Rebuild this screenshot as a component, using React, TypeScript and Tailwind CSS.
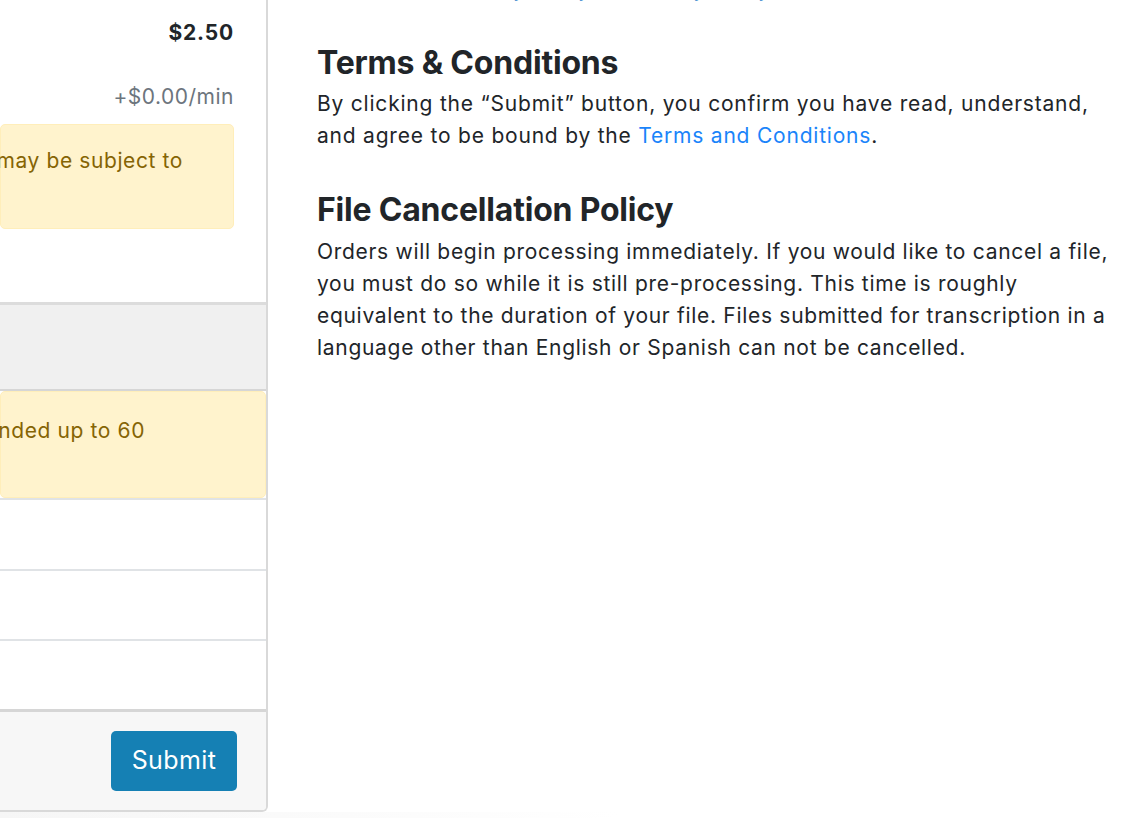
import React from "react";

export default function App() {
  const font = { fontFamily: "Inter, 'Noto Sans', sans-serif" };
  return (
    <div className="relative h-[818px] w-[1128px] overflow-hidden bg-white text-[#212529]" style={font}>
      <div className="flex">
        {/* Left panel (cropped) */}
        <div className="w-[268px] shrink-0 overflow-hidden">
          <div className="overflow-hidden rounded-br-[6px] border-r-2 border-b-2 border-[#d9d9d9]">
            <div className="h-[305px] border-b-[3px] border-[#dcdcdc] bg-white pr-[32px]">
              <div className="flex h-[65px] items-center justify-end text-[21px] font-bold tracking-[0.8px]">$2.50</div>
              <div className="flex h-[59px] items-center justify-end pt-[4px] text-[21px] tracking-[0.5px] text-[#6c757d]">+$0.00/min</div>
              <div className="flex h-[105px] items-start justify-end whitespace-nowrap rounded-[5px] border border-[#ffeeba] bg-[#fff3cd] pt-[20px] pr-[50px] text-[21px] leading-[32px] tracking-[0.6px] text-[#856404]">
                Audio in a foreign language may be subject to
              </div>
            </div>
            <div className="h-[86px] border-b-2 border-[#d6d6d6] bg-[#f0f0f0]" />
            <div className="flex h-[107px] items-start justify-end whitespace-nowrap rounded-[5px] border border-[#ffeeba] bg-[#fff3cd] pt-[23px] pr-[120px] text-[21px] leading-[32px] tracking-[0.6px] text-[#856404]">
              Files are rounded up to 60
            </div>
            <div className="h-[71px] border-t-2 border-[#e0e3e6] bg-white" />
            <div className="h-[70px] border-t-2 border-[#e0e3e6] bg-white" />
            <div className="h-[70px] border-t-2 border-[#e0e3e6] bg-white" />
            <div className="flex h-[101px] items-start justify-end border-t-[3px] border-[#d6d6d6] bg-[#f7f7f7] pt-[19px] pr-[29px]">
              <button className="flex h-[60px] w-[126px] items-center justify-center rounded-[5px] bg-[#1580b4] text-[25px] tracking-[0.4px] text-white">
                Submit
              </button>
            </div>
          </div>
        </div>

        {/* Right column */}
        <div className="ml-[49px] w-[800px] shrink-0">
          <div className="-mt-[27px] whitespace-nowrap pl-[40px] text-[21px] leading-[32px] text-[#1578c8]">
            Read our privacy policy and quality policy
          </div>
          <h4 className="mt-[39px] text-[32px] font-bold leading-[38px] tracking-[-0.2px]">Terms &amp; Conditions</h4>
          <p className="mt-[6px] text-[21px] leading-[32px] tracking-[0.79px]">
            By clicking the “Submit” button, you confirm you have read, understand,
            <br />
            and agree to be bound by the <span className="text-[#1a84fa]">Terms and Conditions</span>.
          </p>
          <h4 className="mt-[39px] text-[32px] font-bold leading-[38px] tracking-[-0.2px]">File Cancellation Policy</h4>
          <p className="mt-[7px] text-[21px] leading-[32px] tracking-[0.7px]">
            Orders will begin processing immediately. If you would like to cancel a file,
            <br />
            you must do so while it is still pre-processing. This time is roughly
            <br />
            equivalent to the duration of your file. Files submitted for transcription in a
            <br />
            language other than English or Spanish can not be cancelled.
          </p>
        </div>
      </div>
      <div className="h-[7px] w-[620px] bg-gradient-to-r from-[#f6f6f6] to-white" />
    </div>
  );
}
